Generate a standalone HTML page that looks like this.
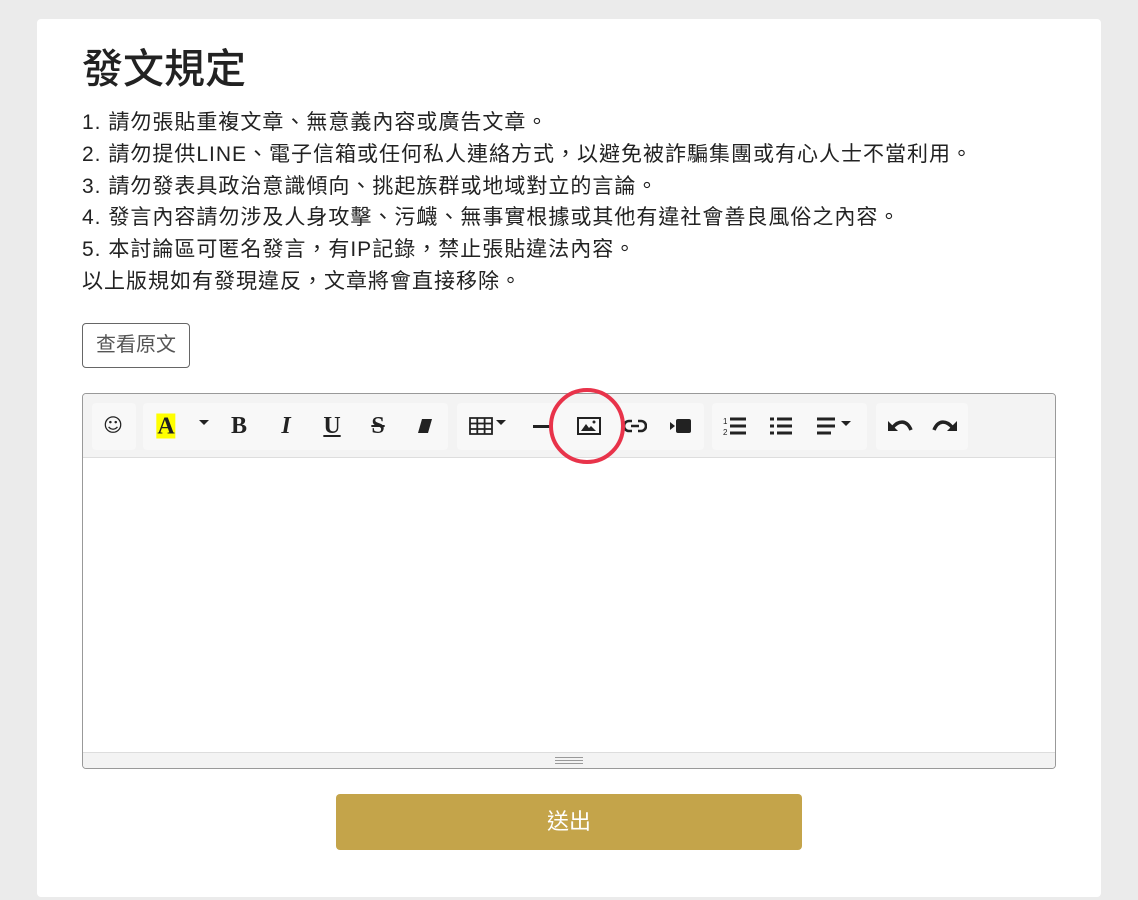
<!DOCTYPE html>
<html><head><meta charset="utf-8"><style>
body{margin:0;background:#ebebeb;width:1138px;height:900px;overflow:hidden;font-family:"Liberation Sans","Noto Sans CJK TC",sans-serif;color:#222}
.card{position:absolute;left:37px;top:19px;width:1064px;height:878px;background:#fff;border-radius:4px}
h1{position:absolute;left:82px;top:41px;margin:0;font-size:41px;font-weight:500;line-height:56px;color:#222}
.rules{position:absolute;left:82px;top:107px;font-size:21px;letter-spacing:1px;line-height:31.8px;color:#222}
.btn{position:absolute;left:82px;top:323px;width:108px;height:45px;border:1px solid #666;border-radius:4px;box-sizing:border-box;font-size:20px;color:#555;text-align:center;line-height:43px}
.ed{position:absolute;left:82px;top:393px;width:974px;height:376px;border:1px solid #999;border-radius:4px;box-sizing:border-box;overflow:hidden}
.tb{position:absolute;left:0;top:0;right:0;height:63px;background:#f3f3f3;border-bottom:1px solid #ddd}
.g{position:absolute;top:9px;height:47px;background:#f8f8f8;border-radius:4px}
.i{position:absolute;top:32px;transform:translate(-50%,-50%);font-family:"Liberation Serif",serif;font-weight:bold;font-size:24px;color:#222;line-height:1}
.st{position:absolute;left:0;right:0;bottom:0;height:15px;background:#f3f3f3;border-top:1px solid #ddd}
.sub{position:absolute;left:336px;top:794px;width:466px;height:56px;background:#c4a44a;border-radius:4px;color:#fff;font-size:22px;text-align:center;line-height:56px}
</style></head><body>
<div class="card"></div>
<h1>發文規定</h1>
<div class="rules">1. 請勿張貼重複文章、無意義內容或廣告文章。<br>2. 請勿提供LINE、電子信箱或任何私人連絡方式，以避免被詐騙集團或有心人士不當利用。<br>3. 請勿發表具政治意識傾向、挑起族群或地域對立的言論。<br>4. 發言內容請勿涉及人身攻擊、污衊、無事實根據或其他有違社會善良風俗之內容。<br>5. 本討論區可匿名發言，有IP記錄，禁止張貼違法內容。<br>以上版規如有發現違反，文章將會直接移除。</div>
<div class="btn">查看原文</div>
<div class="ed">
<div class="tb">
<div class="g" style="left:9px;width:44px"></div>
<div class="g" style="left:60px;width:305px"></div>
<div class="g" style="left:374px;width:247px"></div>
<div class="g" style="left:629px;width:155px"></div>
<div class="g" style="left:793px;width:92px"></div>
<span class="i" style="left:30px;font-family:'DejaVu Sans';font-weight:normal;font-size:19px">☺</span>
<span class="i" style="left:83px;background:#ff0;padding:1px 1px 0">A</span>
<svg style="position:absolute;left:116px;top:26px" width="10" height="6"><path d="M0 0H10L5 5Z" fill="#222"/></svg>
<span class="i" style="left:156px">B</span>
<span class="i" style="left:203px;font-style:italic">I</span>
<span class="i" style="left:249px;text-decoration:underline">U</span>
<span class="i" style="left:295px;text-decoration:line-through">S</span>
<svg style="position:absolute;left:334px;top:24px" width="16" height="16"><path d="M5 1H15L11 15H1Z" fill="#222"/></svg>
<svg style="position:absolute;left:386px;top:23px" width="24" height="18"><path d="M1 1H23V17H1ZM1 6.5H23M1 12H23M8.3 1V17M15.6 1V17" fill="none" stroke="#222" stroke-width="1.8"/></svg>
<svg style="position:absolute;left:413px;top:26px" width="10" height="6"><path d="M0 0H10L5 5Z" fill="#222"/></svg>
<div style="position:absolute;left:450px;top:31px;width:18px;height:3px;background:#222"></div>
<svg style="position:absolute;left:494px;top:23px" width="24" height="18"><rect x="1" y="1" width="22" height="16" fill="none" stroke="#222" stroke-width="2"/><path d="M4 14L9 7L12 11L14 9L19 14Z" fill="#222"/><circle cx="17" cy="5" r="1.5" fill="#222"/></svg>
<svg style="position:absolute;left:540px;top:24px" width="24" height="16"><path d="M9 3H6A5 5 0 0 0 6 13H9M15 3H18A5 5 0 0 1 18 13H15M8 8H16" fill="none" stroke="#222" stroke-width="2.6"/></svg>
<svg style="position:absolute;left:585px;top:24px" width="24" height="16"><rect x="8" y="1" width="15" height="14" rx="2" fill="#222"/><path d="M2 4L7 8L2 12Z" fill="#222"/></svg>
<svg style="position:absolute;left:640px;top:22px" width="24" height="20"><text x="0" y="8" font-size="8" font-family="Liberation Sans" fill="#222">1</text><text x="0" y="19" font-size="8" font-family="Liberation Sans" fill="#222">2</text><path d="M7 3H23M7 10H23M7 17H23" stroke="#222" stroke-width="3"/></svg>
<svg style="position:absolute;left:686px;top:22px" width="24" height="20"><path d="M1 3H5M1 10H5M1 17H5M8 3H23M8 10H23M8 17H23" stroke="#222" stroke-width="3"/></svg>
<svg style="position:absolute;left:733px;top:22px" width="36" height="20"><path d="M1 3H19M1 10H19M1 17H15" stroke="#222" stroke-width="3"/><path d="M25 5H35L30 10Z" fill="#222"/></svg>
<svg style="position:absolute;left:802px;top:22px" width="28" height="18"><path d="M3 5L3 15L13 15Z" fill="#222"/><path d="M8 11C14 4 22 4 26 14" fill="none" stroke="#222" stroke-width="3.5"/></svg>
<svg style="position:absolute;left:849px;top:22px" width="28" height="18"><path d="M25 5L25 15L15 15Z" fill="#222"/><path d="M20 11C14 4 6 4 2 14" fill="none" stroke="#222" stroke-width="3.5"/></svg>
</div>
<div class="st"><div style="position:absolute;left:472px;top:4px;width:28px;height:5px;border-top:1px solid #999;border-bottom:1px solid #999"><div style="margin-top:2px;border-top:1px solid #999"></div></div></div>
</div>
<svg style="position:absolute;left:548px;top:386px" width="80" height="80"><circle cx="39" cy="40" r="36" fill="none" stroke="#e8334a" stroke-width="4"/></svg>
<div class="sub">送出</div>
</body></html>
